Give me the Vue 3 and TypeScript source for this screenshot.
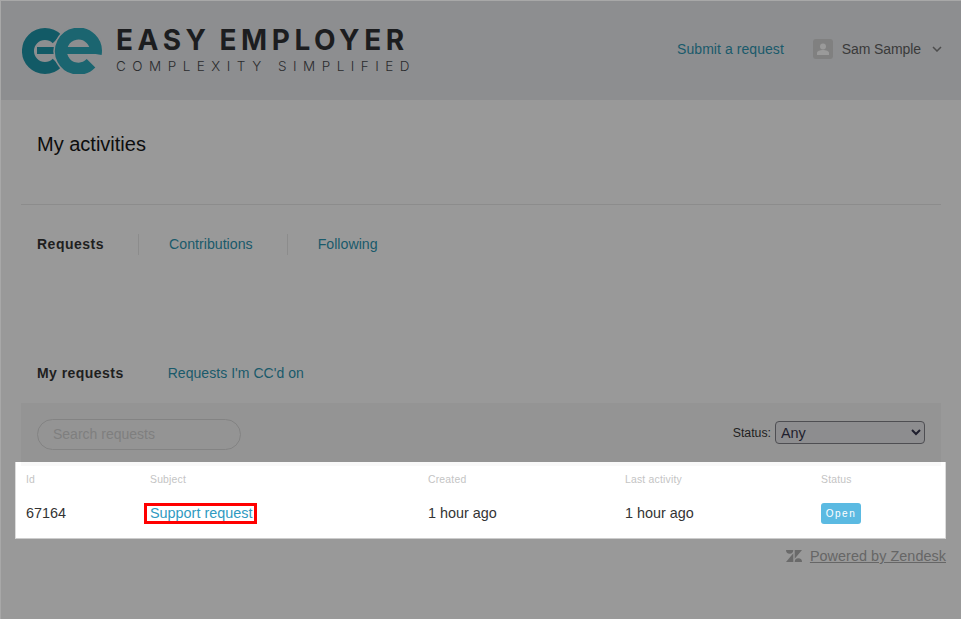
<template>
  <div class="page">
    <header class="header">
      <div class="logo">
        <svg class="logo-mark" width="80" height="46" viewBox="22 27 80 46">
          <path d="M57 38A17 17 0 1 0 57 62" fill="none" stroke="#125a66" stroke-width="12" />
          <path d="M37 49.500H56" fill="none" stroke="#125a66" stroke-width="7" />
          <path d="M95.700 53A17.500 17.500 0 1 0 91 62.300" fill="none" stroke="#8d8e90" stroke-width="15" />
          <path d="M95.700 53A17.500 17.500 0 1 0 91 62.300" fill="none" stroke="#1b6570" stroke-width="12" />
          <path d="M62 49.500H96" fill="none" stroke="#1b6570" stroke-width="7" />
        </svg>
        <div class="logo-text">
          <div class="logo-name">EASY EMPLOYER</div>
          <div class="logo-tag">COMPLEXITY SIMPLIFIED</div>
        </div>
      </div>
      <nav class="user-nav">
        <a class="link submit">Submit a request</a>
        <div class="avatar">
          <svg width="12" height="12" viewBox="0 0 12 12">
            <circle cx="6" cy="3.500" r="3" fill="#9a9a9a" />
            <path d="M0 12V10C0 8 3 7 6 7S12 8 12 10V12Z" fill="#9a9a9a" />
          </svg>
        </div>
        <span class="user-name">Sam Sample</span>
        <svg class="chev" width="10" height="6" viewBox="0 0 10 6">
          <path d="M1 1L5 5L9 1" fill="none" stroke="#4d4d4d" stroke-width="1.500" />
        </svg>
      </nav>
    </header>

    <main class="main">
      <h1 class="title">My activities</h1>
      <div class="tabs">
        <span v-for="tab in tabs" :key="tab.label" class="tab" :class="{ current: tab.current }">{{ tab.label }}</span>
      </div>
      <div class="subtabs">
        <span class="subtab current">My requests</span>
        <a class="link subtab">Requests I'm CC'd on</a>
      </div>
      <div class="filters">
        <input class="search" placeholder="Search requests" />
        <label class="status-filter">
          Status:
          <select class="status-select">
            <option>Any</option>
          </select>
        </label>
      </div>
      <div class="table">
        <div class="row head">
          <span>Id</span>
          <span>Subject</span>
          <span>Created</span>
          <span>Last activity</span>
          <span>Status</span>
        </div>
        <div class="row body-row">
          <span>67164</span>
          <span><a class="subject">Support request</a></span>
          <span>1 hour ago</span>
          <span>1 hour ago</span>
          <span><span class="badge">Open</span></span>
        </div>
      </div>
      <footer class="footer">
        <svg width="16" height="12" viewBox="0 0 16 12">
          <path d="M7.300 3.200V12H0Z M8.700 8.800V0H16Z M0 0A3.650 3.650 0 0 0 7.300 0Z M8.700 12A3.650 3.650 0 0 1 16 12Z" fill="#6a6a6a" />
        </svg>
        <a class="powered">Powered by Zendesk</a>
      </footer>
    </main>
  </div>
</template>

<script setup lang="ts">
const tabs = [
  { label: 'Requests', current: true },
  { label: 'Contributions', current: false },
  { label: 'Following', current: false }
];
</script>

<style>
html,
body {
  margin: 0;
  background: #999;
}
</style>

<style scoped>
.page {
  min-height: 619px;
  box-sizing: border-box;
  border-top: 1px solid #a8a8a8;
  border-left: 1px solid #a8a8a8;
  background: #999;
  font-family: 'Liberation Sans', Arial, sans-serif;
  font-size: 14px;
  color: #1f1f1f;
}
.header {
  height: 99px;
  display: flex;
  align-items: center;
  justify-content: space-between;
  background: #8d8e90;
  box-sizing: border-box;
  padding: 0 19px 3px 21px;
}
.logo {
  display: flex;
  align-items: center;
  gap: 14px;
  margin-top: 3px;
}
.logo-mark {
  display: block;
}
.logo-name {
  font-family: Inter, sans-serif;
  font-weight: 700;
  font-size: 28px;
  line-height: 24px;
  letter-spacing: 4.600px;
  word-spacing: -2.500px;
  color: #1c1d1f;
  white-space: nowrap;
}
.logo-tag {
  margin-top: 7px;
  font-family: Inter, sans-serif;
  font-weight: 300;
  font-size: 13.500px;
  line-height: 14px;
  letter-spacing: 6.500px;
  color: #2a2b2d;
  white-space: nowrap;
}
.user-nav {
  display: flex;
  align-items: center;
}
.link {
  color: #1a5a6b;
}
.submit {
  margin-right: 29px;
  letter-spacing: 0.060px;
}
.avatar {
  width: 20px;
  height: 20px;
  border-radius: 3px;
  background: #808080;
  display: flex;
  align-items: flex-end;
  justify-content: center;
  margin-right: 9px;
}
.avatar svg {
  margin-bottom: 4px;
}
.user-name {
  color: #3a3a3a;
  margin-right: 11px;
  letter-spacing: -0.100px;
}
.chev {
  display: block;
}
.main {
  padding: 0 20px 0 20px;
}
.title {
  margin: 0;
  padding: 32px 16px 0;
  height: 72px;
  box-sizing: content-box;
  font-size: 20px;
  line-height: 24px;
  font-weight: 400;
  color: #0d0d0d;
  border-bottom: 1px solid #8c8c8c;
}
.tabs {
  display: flex;
  align-items: center;
  padding: 29px 0 0 16px;
  height: 21px;
}
.tab {
  color: #1a5a6b;
  font-size: 14.200px;
  padding-right: 34px;
  margin-right: 30px;
  border-right: 1px solid #8c8c8c;
  line-height: 21px;
}
.tab:last-child {
  border-right: none;
}
.tab.current {
  color: #1f1f1f;
  font-size: 14px;
  font-weight: 700;
  letter-spacing: 0.500px;
}
.subtabs {
  display: flex;
  gap: 44px;
  padding: 108px 0 0 16px;
  height: 21px;
  line-height: 21px;
}
.subtab {
  letter-spacing: 0.050px;
}
.subtab.current {
  font-weight: 700;
  color: #1f1f1f;
  letter-spacing: 0.450px;
}
.filters {
  margin-top: 19px;
  height: 59px;
  background: #949494;
  display: flex;
  align-items: center;
  justify-content: space-between;
  padding: 0 16px;
}
.search {
  width: 204px;
  height: 31px;
  box-sizing: border-box;
  margin-top: 3px;
  padding: 0 15px;
  border: 1px solid #838383;
  border-radius: 16px;
  background: transparent;
  font: inherit;
  outline: none;
}
.search::placeholder {
  color: #7f7f7f;
}
.status-filter {
  display: flex;
  align-items: center;
  gap: 4px;
  font-size: 12.300px;
  color: #1f1f1f;
}
.status-select {
  width: 150px;
  height: 23px;
  padding: 0 0 0 1px;
  border: 1px solid #4e4e52;
  border-radius: 4px;
  background: #8d8d8f;
  color: #1f1f2e;
  font: 14.400px 'Liberation Sans', Arial, sans-serif;
}
.table {
  margin: 0 -5px 0 -6px;
  height: 77px;
  background: linear-gradient(#f9f9f9, #f9f9f9) center top / 920px 4px no-repeat, #fff;
  box-sizing: border-box;
  border: 1px solid #dcdcdc;
  border-top: none;
  border-bottom-color: #ccc;
  padding: 0 10px;
}
.row {
  display: grid;
  grid-template-columns: 124px 278px 197px 196px 1fr;
  align-items: center;
}
.head {
  height: 35px;
  font-size: 10.400px;
  letter-spacing: 0.200px;
  color: #c4c4c4;
}
.body-row {
  height: 31px;
  font-size: 14.400px;
  color: #333;
}
.subject {
  color: #2f9ac1;
  outline: 3px solid #f00;
  margin-left: -3px;
  padding: 0 2px 0 3px;
  display: inline-block;
  line-height: 15px;
}
.badge {
  display: block;
  width: 40px;
  height: 21px;
  margin-top: 2px;
  line-height: 22px;
  text-align: center;
  background: #5bbae2;
  border-radius: 3px;
  color: #fff;
  font-size: 10px;
  letter-spacing: 1.500px;
}
.footer {
  display: flex;
  justify-content: flex-end;
  align-items: center;
  gap: 8px;
  margin-right: -5px;
  padding-top: 9px;
}
.powered {
  color: #666;
  font-size: 14.400px;
  letter-spacing: 0.050px;
  text-decoration: underline;
}
</style>
